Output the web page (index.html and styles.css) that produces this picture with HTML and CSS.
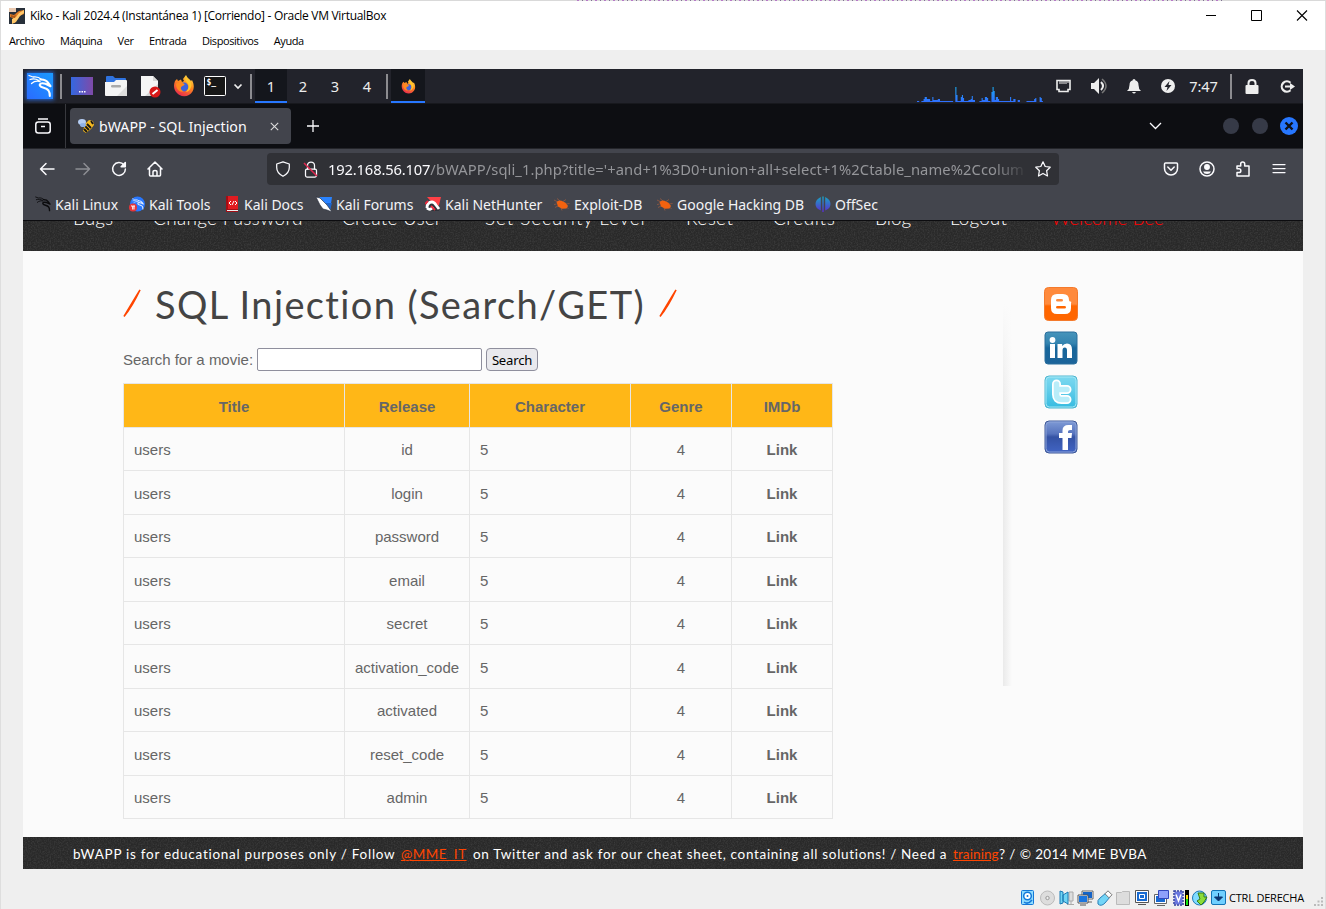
FILE: index.html
```html
<!DOCTYPE html>
<html lang="es">
<head>
<meta charset="utf-8">
<title>Kiko - Kali 2024.4 (Instantánea 1) [Corriendo] - Oracle VM VirtualBox</title>
<link rel="stylesheet" href="styles.css">
</head>
<body>
<svg class="defs" width="0" height="0">
  <defs>
    <linearGradient id="gKali" x1="0" y1="1" x2="1" y2="0"><stop offset="0" stop-color="#2a6bff"/><stop offset="1" stop-color="#1a9bff"/></linearGradient>
    <linearGradient id="gDesk" x1="0" y1="0" x2="1" y2="0"><stop offset="0" stop-color="#3468e0"/><stop offset="1" stop-color="#7f4aa8"/></linearGradient>
    <linearGradient id="gFox" x1="0.8" y1="0" x2="0.3" y2="1"><stop offset="0" stop-color="#ffe14a"/><stop offset="0.45" stop-color="#ff8a1e"/><stop offset="1" stop-color="#e8284e"/></linearGradient>
    <linearGradient id="gOff" x1="0" y1="0" x2="0" y2="1"><stop offset="0" stop-color="#18a5c4"/><stop offset="1" stop-color="#5b2bd0"/></linearGradient>
    <linearGradient id="gSpec" x1="0" y1="0" x2="0" y2="1"><stop offset="0" stop-color="#1aa8f0"/><stop offset="1" stop-color="#2f6fff"/></linearGradient>
    <linearGradient id="gBlog" x1="0" y1="0" x2="0" y2="1"><stop offset="0.5" stop-color="#ff8a3c"/><stop offset="0.56" stop-color="#ff6600"/></linearGradient>
    <linearGradient id="gLi" x1="0" y1="0" x2="0" y2="1"><stop offset="0" stop-color="#4694bb"/><stop offset="0.35" stop-color="#3484b0"/><stop offset="0.5" stop-color="#17669b"/><stop offset="1" stop-color="#1c649a"/></linearGradient>
    <linearGradient id="gTw" x1="0" y1="0" x2="0" y2="1"><stop offset="0" stop-color="#7dd9f0"/><stop offset="0.5" stop-color="#5dcbe9"/><stop offset="1" stop-color="#36bbe0"/></linearGradient>
    <linearGradient id="gFb" x1="0" y1="0" x2="0" y2="1"><stop offset="0" stop-color="#7f9bd6"/><stop offset="0.4" stop-color="#5673bd"/><stop offset="0.5" stop-color="#3452a4"/><stop offset="1" stop-color="#4265c4"/></linearGradient>
    <filter id="grain" x="0" y="0" width="100%" height="100%"><feTurbulence type="fractalNoise" baseFrequency="0.7" numOctaves="2" seed="4"/><feColorMatrix values="0 0 0 0 0.5  0 0 0 0 0.5  0 0 0 0 0.5  1 0 0 0 -0.38"/></filter>
    <symbol id="dragon" viewBox="0 0 24 24"><g fill="none" stroke="currentColor" stroke-linecap="round" stroke-linejoin="round"><path stroke-width="1.300" d="M1 1.500l4 1.500C8 2.500 11 3 13.500 5.500M2 5.500C5 4.500 8 4.800 11 6.500M3.500 9.500C6 7.300 9 6.800 12 7.500"/><path stroke-width="2.100" d="M12.500 5.500c3.500-.2 6 1 7.500 3.200l2.500 3.500-5-2.400c-4.500-1.300-6.500.2-5.500 2 1.500 2.600 6 1.400 8.500 4.700 1.300 1.800 1.300 3.500 1.300 5.500"/></g></symbol>
    <symbol id="fox" viewBox="0 0 22 22"><path fill="url(#gFox)" d="M2 6l2-2 1 2 3-1.500 1 2.500 2-1-1-2 3-4c1 3 4 4 5 6l1-1c2 4 2.500 8 .5 11.500C17 21 11 22.500 6.500 20 2 17.500-.500 12 2 6z"/><circle cx="11" cy="12" r="4.400" fill="#3d63dc"/><path fill="#ff8a1e" d="M3 9c2-2 6-2 8-.300 2 1.500-2 1.800-3 3.600-.5 1.700.5 3.600 3 4-4 1.700-8-2-8-7.300z"/><path fill="#ffc62c" d="M13 1c1 3 5 4 5.500 9-.500 4-3 7-6 7 3-2 4-6 2-9-2-2-3-4-1.500-7z"/></symbol>
    <symbol id="bug" viewBox="0 0 16 16"><path fill="#f2620f" d="M2.500 6q2-2.200 5-1.200l4 2 2.500 3.200-1.500 2.500-4.500.3-4-2.300z"/><path stroke="#c9663a" stroke-width=".5" fill="none" d="M4 6L0 4M6 5L3 2.500M9 5.500l3-2M2.500 8L0 8.500M12 8l3.500-.5M12 11l2.500 1.500M7 12l1 2.500M4 10l-3 1.500"/></symbol>
  </defs>
</svg>

<div class="strip"><i class="s1"></i><i class="s2"></i></div>

<div class="window">
  <header class="titlebar">
    <svg class="app-icon" width="16" height="16" viewBox="0 0 16 16"><path fill="#28303a" d="M0 0h16v16H0z"/><path fill="#e9c9b0" d="M0 0h7v4H0z"/><path d="M1 6l4 1 5-4 5-1v4l-5 2-3 3-1 4H3l1-5-3-1z" fill="#e07c24"/><path d="M3 11l4-2 3-4 5-3v3l-4 3-4 6-4 2z" fill="#ffc86a"/><path fill="#aa5718" d="M2 7l3 1 2-2-1 4-4-1z"/></svg>
    <span class="title">Kiko - Kali 2024.4 (Instantánea 1) [Corriendo] - Oracle VM VirtualBox</span>
    <div class="win-controls">
      <svg width="12" height="12"><path d="M1 5.500h10" stroke="#000"/></svg>
      <svg width="12" height="12"><path d="M.5.500h10v10H.5z" stroke="#000" fill="none"/></svg>
      <svg width="12" height="12"><path d="M1 .5l10 10M11 .5L1 10.500" stroke="#000" stroke-width="1.100"/></svg>
    </div>
  </header>
  <nav class="menubar"><span>Archivo</span><span>Máquina</span><span>Ver</span><span>Entrada</span><span>Dispositivos</span><span>Ayuda</span></nav>

  <main class="screen">
    <div class="panel">
      <div class="slot w34"><svg class="kali" width="26" height="26" viewBox="0 0 26 26"><path fill="url(#gKali)" d="M0 0h26v26H0z"/><use href="#dragon" x="1" y="1" width="24" height="24" color="#fff"/></svg></div>
      <div class="divider w8"></div>
      <div class="slot w34"><svg width="22" height="18" viewBox="0 0 22 18"><path fill="url(#gDesk)" d="M0 0h22v18H0z"/><path fill="#fff" d="M8 14h1.500v1.500H8zM10.500 14H12v1.500h-1.500zM13 14h1.500v1.500H13z"/></svg></div>
      <div class="slot w34"><svg width="22" height="20" viewBox="0 0 22 20"><path fill="#2f73e0" d="M1 1q0-1 1-1h6l2 2h10q1 0 1 1v5H1z"/><path fill="#f4f4f4" d="M0 6h9l2-2h10q1 0 1 1v14q0 1-1 1H1q-1 0-1-1z"/><path fill="#ddd" d="M22 10v10H12z"/><rect x="6" y="9" width="10" height="2.500" rx="1.200" fill="#aaa"/></svg></div>
      <div class="slot w34"><svg width="22" height="23" viewBox="0 0 22 23"><path fill="#f5f5f5" d="M2 1h12l5 5v15H2z"/><path fill="#d7d7d7" d="M14 1v5h5zM6 21L19 9v12z"/><circle cx="16" cy="17" r="5.500" fill="#d81818"/><path d="M13.500 19l5-4" stroke="#fff" stroke-width="2"/></svg></div>
      <div class="slot w34"><svg width="22" height="22"><use href="#fox"/></svg></div>
      <div class="slot w27"><svg width="22" height="20" viewBox="0 0 22 20"><rect x=".5" y=".5" width="21" height="19" rx="1" fill="#171717" stroke="#fff"/><text class="prompt" x="2.500" y="9">$_</text></svg></div>
      <div class="slot w19"><svg width="10" height="7"><path d="M1.500 1.500L5 5l3.500-3.500" fill="none" stroke="#eee" stroke-width="1.700"/></svg></div>
      <div class="divider w8"></div>
      <div class="slot w32 active">1</div><div class="slot w32">2</div><div class="slot w32">3</div><div class="slot w32">4</div>
      <div class="divider w8"></div>
      <div class="slot w34 active"><svg width="15" height="15" viewBox="0 0 22 22"><use href="#fox" width="22" height="22"/></svg></div>
      <div class="grow"></div>
      <svg class="spectrum" width="127" height="18" viewBox="4 0 116 18" preserveAspectRatio="none"><path fill="url(#gSpec)" d="M0 17h4v-1h2v1h2v-1h2v-2h1v-2h2v2h3v2h2v-4h1v3h4v-1h2v2h12v1h2V2h1v8h1v6h3v-4h1v-2h1v3h1v3h4v-1h2v-1h1v-3h1v4h2v2h4v-1h2v-3h1v2h2v-3h2v1h1v3h2v1h1V7h1V2h1v4h1v9h1v-3h2v2h1v2h10v-4h1v4h2v-2h2v3h2v-2h2v2h6v-1h4v0h3v-2h1v-1h1v4h3v-5h1v1h1v3h1v1H0z"/></svg>
      <div class="slot w38"><svg width="15" height="14" viewBox="0 0 15 14"><path d="M1 1.500h13v9h-2v2H3v-2H1z" fill="none" stroke="#eee" stroke-width="1.600"/><path d="M4 2v3M6 2v3M8 2v3M10 2v3M12 2v2" stroke="#eee"/></svg></div>
      <div class="slot w34"><svg width="18" height="16" viewBox="0 0 18 16"><path fill="#eee" d="M1 5h3l5-5v16l-5-5H1z"/><path d="M11 4q4 4 0 8" fill="none" stroke="#eee" stroke-width="2"/><path d="M12 1q8 7 0 14" fill="none" stroke="#777" stroke-width="1.500"/></svg></div>
      <div class="slot w36"><svg width="14" height="15" viewBox="0 0 14 15"><path fill="#eee" d="M7 0q1.500 0 1.500 1.500 3 .8 3 4.500 0 4 2.500 6H0q2.500-2 2.500-6 0-3.700 3-4.500Q5.500 0 7 0zM5 13h4q-2 3-4 0z"/></svg></div>
      <div class="slot w32"><svg width="14" height="14" viewBox="0 0 14 14"><circle cx="7" cy="7" r="7" fill="#eee"/><path fill="#22232b" d="M8.500 2L3.500 8H6.500L5.500 12l5-6H7.500z"/></svg></div>
      <div class="slot clock">7:47</div>
      <div class="divider w16"></div>
      <div class="slot w26"><svg width="14" height="15" viewBox="0 0 14 15"><rect x=".5" y="6" width="13" height="9" rx="1" fill="#eee"/><path d="M3.500 7V4q0-3 3.500-3t3.500 3v3" fill="none" stroke="#eee" stroke-width="2"/></svg></div>
      <div class="slot w32 exit"><svg width="15" height="13" viewBox="0 0 15 13"><path d="M10.500 2.700A5.200 5.200 0 1 0 10.500 10.300" fill="none" stroke="#eee" stroke-width="2.200"/><path d="M5 6.500h6" stroke="#eee" stroke-width="2"/><path fill="#eee" d="M10 3l5 3.500-5 3.500z"/></svg></div>
    </div>

    <div class="tabbar">
      <div class="tab-history"><svg width="16" height="16" viewBox="0 0 16 16" fill="none" stroke="#fbfbfe" stroke-width="1.500"><path d="M3 1h10"/><rect x=".8" y="4" width="14.400" height="11" rx="2.500"/><path d="M6 8.500h4"/></svg></div>
      <div class="tab">
        <svg width="17" height="16" viewBox="0 0 17 16"><path fill="#f3b820" d="M7 6l4-4 4 1 1 4-3 4-5 4-3-2z"/><path d="M7 8l4 4M9 6l4 4M6 11l3 3M13 3l2 3" stroke="#151515" stroke-width="1.800"/><ellipse cx="4" cy="4" rx="4" ry="3" fill="#b5cdf3"/><ellipse cx="5" cy="7" rx="3" ry="2" fill="#8fb2e8"/></svg>
        <span>bWAPP - SQL Injection</span>
        <svg class="tab-close" width="9" height="9"><path d="M.8.800l7.400 7.400M8.200.800L.8 8.200" stroke="#ddd" stroke-width="1.100"/></svg>
      </div>
      <svg class="plus" width="12" height="12"><path d="M6 0v12M0 6h12" stroke="#fbfbfe" stroke-width="1.300"/></svg>
      <div class="grow"></div>
      <svg class="all-tabs" width="13" height="8"><path d="M1 1l5.500 5.500L12 1" fill="none" stroke="#fbfbfe" stroke-width="1.300"/></svg>
      <svg class="frame-controls" width="78" height="20" viewBox="0 0 78 20"><circle cx="10" cy="10" r="8" fill="#363a47"/><circle cx="39" cy="10" r="8" fill="#363a47"/><circle cx="68" cy="10" r="9" fill="#2777ff"/><path d="M64.500 6.500l7 7M71.500 6.500l-7 7" stroke="#101116" stroke-width="2.400"/></svg>
    </div>

    <div class="toolbar">
      <div class="nav-buttons">
        <svg width="16" height="16" viewBox="0 0 16 16" class="ln"><path d="M15 8H1.500M7 2.500L1.500 8 7 13.500"/></svg>
        <svg width="16" height="16" viewBox="0 0 16 16" class="ln dim"><path d="M1 8h13.500M9 2.500L14.500 8 9 13.500"/></svg>
        <svg width="16" height="16" viewBox="0 0 16 16" class="ln"><path d="M13 4A6.400 6.400 0 1 0 14.400 8"/><path d="M14.300 1.500v4.200h-4.200z" fill="#fbfbfe"/></svg>
        <svg width="16" height="16" viewBox="0 0 16 16" class="ln"><path d="M1 8l7-7 7 7M2.500 7v7q0 1 1 1h9q1 0 1-1V7M6 15v-4q0-1.500 2-1.500t2 1.500v4"/></svg>
      </div>
      <div class="urlbar">
        <svg width="16" height="16" viewBox="0 0 16 16" class="ln thin"><path d="M8 .8l6.300 2.200v3.500Q14.300 12 8 15.300 1.700 12 1.700 6.500V3z"/></svg>
        <svg class="insecure" width="16" height="17" viewBox="0 0 16 17"><g class="ln thin"><rect x="2.500" y="8" width="11" height="8" rx="1.500"/><path d="M4.500 8V4.500a3.500 3.500 0 0 1 7 0V8"/></g><path d="M1 2l13 13" stroke="#e22850" stroke-width="1.500"/></svg>
        <span class="url"><b>192.168.56.107</b>/bWAPP/sqli_1.php?title='+and+1%3D0+union+all+select+1%2Ctable_name%2Ccolum</span>
        <svg width="16" height="16" viewBox="0 0 16 16" class="ln thin"><path d="M8 .8l2.200 4.700 5 .7-3.600 3.500.9 5.300L8 12.500 3.500 15l.9-5.300L.8 6.200l5-.7z"/></svg>
      </div>
      <div class="grow"></div>
      <div class="nav-buttons right">
        <svg width="16" height="16" viewBox="0 0 16 16" class="ln"><path d="M2.500 2h11q1 0 1 1v4.500a6.500 6.500 0 0 1-13 0V3q0-1 1-1zM4.800 6L8 9.200 11.200 6"/></svg>
        <svg width="16" height="16" viewBox="0 0 16 16" class="ln"><circle cx="8" cy="8" r="7"/><circle cx="8" cy="6" r="2.200" fill="#fbfbfe"/><path d="M4 10.500h8q-1 2.500-4 2.500t-4-2.500z" fill="#fbfbfe" stroke="none"/></svg>
        <svg width="16" height="16" viewBox="0 0 16 16" class="ln"><path d="M2 15V11.500h2a1.700 1.700 0 0 0 0-3.700H2V5h3.700V3a2 2 0 0 1 4 0v2H14v10z"/></svg>
        <svg width="16" height="16" viewBox="0 0 16 16" class="ln thin"><path d="M2 3.500h12M2 7.500h12M2 11.500h12"/></svg>
      </div>
    </div>

    <div class="bookmarks">
      <span class="bm b1"><svg width="16" height="16"><use href="#dragon" width="16" height="16" color="#0b0b0d"/></svg>Kali Linux</span>
      <span class="bm b2"><svg width="16" height="16" viewBox="0 0 16 16"><circle cx="8.500" cy="8" r="7.500" fill="#2777ff"/><use href="#dragon" x="3" y="2" width="12" height="12" color="#e8f0ff"/><circle cx="4" cy="11.500" r="4" fill="#e5353a"/><path d="M2 10h1.700v3.500M4 10h2M5 10v3.500" stroke="#fff" fill="none"/></svg>Kali Tools</span>
      <span class="bm b3"><svg width="16" height="16" viewBox="0 0 16 16"><path fill="#a30e15" d="M2 0h12v16H2z"/><path fill="#e01b20" d="M4 0h10v13H4z"/><path fill="#eee" d="M3 14h11v1H3z"/><path d="M7 5L5 7l2 2M11 5l2 2-2 2M10 5L8 9" stroke="#fff" fill="none"/></svg>Kali Docs</span>
      <span class="bm b4"><svg width="16" height="16" viewBox="0 0 16 16"><path fill="#2a83ff" d="M3 1h13l-2 13z"/><path fill="#1d65cc" d="M8 7h8l-2 7z"/><path fill="#fff" stroke="#202735" stroke-width=".6" d="M0 1l4 1 3 3 4 4 5 7-5-2-4-1-3-4z"/></svg>Kali Forums</span>
      <span class="bm b5"><svg width="16" height="16" viewBox="0 0 16 16"><path fill="#ff4046" d="M2 1h14l-3 12z"/><path fill="#30333a" d="M0 8l7-3 7 5v5H2z"/><path fill="none" stroke="#fff" stroke-width="2.800" d="M2 12q0-6 5-6 2 0 4 3l3 4M2 12q3 3 6-1"/><path fill="none" stroke="#e9283c" stroke-width="1.800" d="M3 5l-3 3M6 10l4 4"/></svg>Kali NetHunter</span>
      <span class="bm b6"><svg width="16" height="16"><use href="#bug"/></svg>Exploit-DB</span>
      <span class="bm b7"><svg width="16" height="16"><use href="#bug"/></svg>Google Hacking DB</span>
      <span class="bm b8"><svg width="16" height="16" viewBox="0 0 16 16" fill="url(#gOff)"><path d="M5.800 1v13.500Q.5 12.500.5 8T5.800 1zM10.200 1v13.500Q15.500 12.500 15.500 8T10.200 1zM7.300.500h1.400v15.500H7.300z"/></svg>OffSec</span>
    </div>

    <div class="page">
      <div class="site-nav">
        <svg class="grain"><rect width="100%" height="100%" filter="url(#grain)"/></svg>
        <div class="links"><span class="n1">Bugs</span><span class="n2">Change Password</span><span class="n3">Create User</span><span class="n4">Set Security Level</span><span class="n5">Reset</span><span class="n6">Credits</span><span class="n7">Blog</span><span class="n8">Logout</span><span class="n9">Welcome Bee</span></div>
      </div>
      <div class="content">
        <section class="main">
          <h1><svg width="18" height="30"><path d="M1 27.500Q9 18 17 1 12 9 1 27.500z" fill="#ff4500" stroke="#ff4500" stroke-width="1.500"/></svg><span>SQL Injection (Search/GET)</span><svg width="18" height="30"><path d="M1 27.500Q9 18 17 1 12 9 1 27.500z" fill="#ff4500" stroke="#ff4500" stroke-width="1.500"/></svg></h1>
          <form class="search"><label for="title">Search for a movie:</label><input id="title" type="text"><button type="button">Search</button></form>
          <table>
            <colgroup><col class="c1"><col class="c2"><col class="c3"><col class="c4"><col class="c5"></colgroup>
            <thead><tr><th>Title</th><th>Release</th><th>Character</th><th>Genre</th><th>IMDb</th></tr></thead>
            <tbody>
              <tr><td>users</td><td>id</td><td>5</td><td>4</td><td>Link</td></tr>
              <tr><td>users</td><td>login</td><td>5</td><td>4</td><td>Link</td></tr>
              <tr><td>users</td><td>password</td><td>5</td><td>4</td><td>Link</td></tr>
              <tr><td>users</td><td>email</td><td>5</td><td>4</td><td>Link</td></tr>
              <tr><td>users</td><td>secret</td><td>5</td><td>4</td><td>Link</td></tr>
              <tr><td>users</td><td>activation_code</td><td>5</td><td>4</td><td>Link</td></tr>
              <tr><td>users</td><td>activated</td><td>5</td><td>4</td><td>Link</td></tr>
              <tr><td>users</td><td>reset_code</td><td>5</td><td>4</td><td>Link</td></tr>
              <tr><td>users</td><td>admin</td><td>5</td><td>4</td><td>Link</td></tr>
            </tbody>
          </table>
        </section>
        <aside class="side">
          <svg width="34" height="34" viewBox="0 0 34 34"><rect x=".5" y=".5" width="33" height="33" rx="4" fill="url(#gBlog)" stroke="#f47a2c"/><path fill="#fff" fill-rule="evenodd" d="M13 7h6q6 0 6 6 0 1.500 1.500 1.500T27 16v5q0 6-6 6h-8q-6 0-6-6v-8q0-6 6-6zm.5 5q-1.500 0-1.500 1.300t1.500 1.300h4q1.500 0 1.500-1.300T17.500 12zm0 7q-1.500 0-1.500 1.300t1.500 1.300h7q1.500 0 1.500-1.300T20.500 19z"/></svg>
          <svg width="34" height="34" viewBox="0 0 34 34"><rect x="1" y="1" width="32" height="32" rx="3" fill="url(#gLi)" stroke="#2b6e9c"/><circle cx="8.500" cy="9" r="2.900" fill="#fff"/><path fill="#fff" d="M6 13h5v14H6zM13.500 13h4.700v2q1.600-2.500 4.800-2.500 5 0 5 6V27h-5v-7.500q0-3-2.200-3-2.300 0-2.300 3V27h-5z"/></svg>
          <svg width="34" height="34" viewBox="0 0 34 34"><rect x="1" y="1" width="32" height="32" rx="4" fill="url(#gTw)" stroke="#4fb5cf"/><rect x="2" y="2" width="30" height="30" rx="3.500" fill="none" stroke="#a5e7f5"/><path d="M12.500 9v10.500q0 5 5 5H23M12.500 14.500H23" fill="none" stroke="#fff" stroke-width="9" stroke-linecap="round"/><path d="M12.500 9v10.500q0 5 5 5H23M12.500 14.500H23" fill="none" stroke="#b9edf9" stroke-width="5.500" stroke-linecap="round"/></svg>
          <svg width="34" height="34" viewBox="0 0 34 34"><rect x="1" y="1" width="32" height="32" rx="4" fill="url(#gFb)" stroke="#3d5796"/><rect x="2" y="2" width="30" height="30" rx="3.500" fill="none" stroke="#8da4d8"/><path fill="#fff" d="M18.500 30V18H15v-5h3.500v-2.500q0-5.500 6-5.500h3.500v5h-2q-2 0-2 1.500V13h4l-.5 5H24v12z"/></svg>
        </aside>
      </div>
      <footer>
        <svg class="grain"><rect width="100%" height="100%" filter="url(#grain)"/></svg>
        <p><span class="f1">bWAPP is for educational purposes only / Follow</span><a class="f2">@MME_IT</a><span class="f3">on Twitter and ask for our cheat sheet, containing all solutions! / Need a</span><a class="f4">training</a><span class="f5">? / © 2014 MME BVBA</span></p>
      </footer>
    </div>
  </main>

  <div class="statusbar">
    <svg width="206" height="16" viewBox="0 0 206 16">
      <rect x="1.500" y=".5" width="12" height="14" rx="1" fill="#8fdcff" stroke="#1378d8"/><circle cx="7.500" cy="6" r="3.800" fill="#fff" stroke="#1378d8" stroke-width="1.500"/><circle cx="7.500" cy="6" r="1" fill="#1378d8"/><path d="M4 12q4 3 8-2" stroke="#1378d8" fill="none" stroke-width="1.500"/>
      <circle cx="27.500" cy="8" r="7" fill="#ddd" stroke="#bbb"/><circle cx="27.500" cy="8" r="1.700" fill="#eee" stroke="#999"/>
      <path d="M49 2h4v9h-4zM47 14.500h7M51 11v3" stroke="#aaa" fill="#ddd"/><path d="M40 1l3 1v11l-3 1zM43 5l5-3v12l-5-3z" fill="#70d4f4" stroke="#1b7ab5"/>
      <path d="M62.500 1.500h10v7h-10z" fill="#1464c8" stroke="#fff"/><path d="M62 1h11v8H62zM68 12h4" fill="none" stroke="#666"/><path d="M58.500 5.500h9v7h-9z" fill="#1b76df" stroke="#fff"/><path d="M58 5h10v8H58zM60 15h6" fill="none" stroke="#555"/>
      <path d="M86 3l4 4-5 6q-4 4-7 1-1-4 2-6z" fill="#73d5f7" stroke="#2b7fb6"/><path d="M88 .8l4 4-3 3-4-4z" fill="#fff" stroke="#777"/>
      <path d="M96.500 2.500h5l1-1h7v13h-13z" fill="#ddd" stroke="#bbb"/>
      <path d="M115.500.500h13v12h-13zM118 14.500h8" fill="#fff" stroke="#555"/><path d="M117 2h10v9h-10z" fill="#176ad1"/><path d="M119.500 4.500h5v4h-5z" fill="#176ad1" stroke="#fff"/>
      <path d="M134.500 4.500h12v9h-12zM137 15.500h8" fill="#fff" stroke="#666"/><path d="M136 6h9v6h-9z" fill="#176ad1"/><path d="M138.500.500h10v8h-10z" fill="#8ea0fa" stroke="#3348bd"/>
      <path d="M154.500 1.500h8v13h-8z" fill="#6877df"/><path d="M154 1h9v14h-9z" fill="none" stroke="#3140a1" stroke-width="1.500" stroke-dasharray="2 1"/><path d="M156 4.500l2.500 6.500L161 4.500" fill="none" stroke="#fff" stroke-width="1.500"/><path d="M165 0h4v16h-4z"/><path d="M166 5h2v4h-2z" fill="#ffe000"/><path d="M166 9h2v6h-2z" fill="#12e512"/>
      <circle cx="179.500" cy="8" r="7" fill="#80dbff" stroke="#1e78b8"/><path d="M178 3l6 0v4l3 0-3 5-3 3-4-4 3-2z" fill="#8cdd39" stroke="#387a1a"/>
      <rect x="191.500" y=".5" width="14" height="14" rx="1.500" fill="#70d0ff" stroke="#1374b6"/><path d="M198.500 3v5M194.500 7h8l-4 4z" fill="#0b3570" stroke="#0b3570"/>
    </svg>
    <span>CTRL DERECHA</span>
    <svg class="grip" width="10" height="10"><path fill="#bbb" d="M7 0h2v2H7zM7 3.500h2v2H7zM7 7h2v2H7zM3.500 3.500h2v2h-2zM3.500 7h2v2h-2zM0 7h2v2H0z"/></svg>
  </div>
</div>
</body>
</html>
```
FILE: styles.css
```css
* { box-sizing: border-box; }
body { margin: 0; width: 1326px; height: 909px; overflow: hidden; background: #efefef; font-family: "Noto Sans", sans-serif; }
svg { display: block; flex: none; }
.defs { position: absolute; }
.strip { height: 1px; background: #d9d9d9; display: flex; }
.strip .s1 { width: 577px; }
.strip .s2 { width: 645px; background: repeating-linear-gradient(90deg, #b778c8 0 2px, #ddd 2px 5px, #7f7192 5px 6px, #ddd 6px 9px); }
.window { height: 908px; border-left: 1px solid #dedede; border-right: 1px solid #dedede; display: flex; flex-direction: column; }
.grow { flex: 1; }

/* VirtualBox frame */
.titlebar { height: 30px; background: #fff; display: flex; align-items: center; padding-left: 8px; }
.title { margin-left: 5px; font: 12px/16px "Open Sans", sans-serif; letter-spacing: -.3px; color: #000; flex: 1; white-space: nowrap; }
.win-controls { display: flex; gap: 33.500px; padding-right: 17px; }
.menubar { height: 19px; background: #fff; display: flex; gap: 15.500px; padding-left: 8px; font: 11px/19px "Open Sans", sans-serif; letter-spacing: -.42px; color: #000; }
.screen { width: 1280px; height: 800px; margin: 19px 0 0 22px; display: flex; flex-direction: column; overflow: hidden; }
.statusbar { height: 40px; display: flex; align-items: center; justify-content: flex-end; padding-top: 18px; font: 11px/16px "Open Sans", sans-serif; letter-spacing: -.2px; color: #000; gap: 3px; }
.grip { margin: 8px 1px 0 7px; }

/* Desktop panel */
.panel { height: 35px; flex: none; background: #22232b; border-bottom: 1px solid #17181d; display: flex; color: #ededed; font-size: 14.600px; }
.slot { display: flex; align-items: center; justify-content: center; height: 34px; }
.w8 { width: 8px; } .w16 { width: 16px; } .w19 { width: 19px; } .w26 { width: 26px; } .w27 { width: 27px; } .w32 { width: 32px; } .w34 { width: 34px; } .w36 { width: 36px; } .w38 { width: 38px; }
.divider { height: 25px; margin-top: 5px; background: linear-gradient(#8c8c90, #8c8c90) center / 2px 100% no-repeat; }
.active { background: #14161c; border-bottom: 2px solid #2777ff; padding-top: 2px; }
.kali { box-shadow: 0 0 4px 1px #2563cf; }
.prompt { font: bold 8px "DejaVu Sans Mono", monospace; fill: #fff; }
.spectrum { margin-top: 16px; }
.clock { width: 39px; letter-spacing: -.1px; }
.exit { margin-left: 6px; }

/* Browser chrome */
.tabbar { height: 45px; flex: none; background: #0d0e12; display: flex; align-items: center; border-bottom: 1px solid #24252a; }
.tab-history { width: 43px; height: 44px; border-right: 1px solid #38393e; display: flex; align-items: center; justify-content: center; padding-right: 2px; }
.tab { width: 221px; height: 36px; margin-left: 4px; background: #42444c; border-radius: 4px; display: flex; align-items: center; padding-left: 8px; color: #fbfbfe; font-size: 14.200px; }
.tab span { margin-left: 4px; flex: 1; white-space: nowrap; }
.tab-close { margin-right: 12px; }
.plus { margin-left: 16px; }
.all-tabs { margin-right: 59px; }
.frame-controls { margin-right: 4px; }
.toolbar { height: 40px; flex: none; background: #43454d; display: flex; align-items: center; }
.nav-buttons { width: 244px; display: flex; gap: 20px; padding-left: 16px; }
.nav-buttons.right { width: 140px; padding: 0 16px 0 0; }
.ln { fill: none; stroke: #fbfbfe; stroke-width: 1.500; stroke-linejoin: round; stroke-linecap: round; }
.thin { stroke-width: 1.250; }
.dim { opacity: .4; }
.urlbar { width: 792px; height: 32px; background: #303136; border-radius: 4px; display: flex; align-items: center; padding: 0 8px; }
.insecure { margin-left: 12px; }
.url { margin-left: 9px; width: 700px; margin-right: 7px; overflow: hidden; white-space: nowrap; color: #95969a; font-size: 14.720px; letter-spacing: .085px; -webkit-mask-image: linear-gradient(90deg, #000 95%, transparent); mask-image: linear-gradient(90deg, #000 95%, transparent); }
.url b { color: #fbfbfe; font-weight: 400; letter-spacing: -.15px; }
.bookmarks { height: 32px; flex: none; background: #43454d; border-bottom: 1px solid #0c0c0f; display: flex; padding-left: 12px; color: #f3f3f6; font-size: 14px; }
.bm { display: flex; align-items: center; gap: 4px; white-space: nowrap; height: 30px; }
.b1 { width: 94px; } .b2 { width: 95px; } .b3 { width: 92px; } .b4 { width: 109px; } .b5 { width: 129px; } .b6 { width: 103px; } .b7 { width: 158px; }

/* Web page */
.page { flex: 1; display: flex; flex-direction: column; background: #fbfbfb; }
.site-nav { height: 30px; background: #292929; position: relative; overflow: hidden; }
.grain { position: absolute; left: 0; top: 0; width: 100%; height: 100%; opacity: .28; }
.links { position: relative; display: flex; margin-top: -15px; padding-left: 50px; color: #fff; font: 300 19px/24px Lato, sans-serif; white-space: nowrap; }
.n1 { width: 80px; } .n2 { width: 189px; letter-spacing: .3px; } .n3 { width: 143px; letter-spacing: .2px; } .n4 { width: 201px; letter-spacing: .9px; } .n5 { width: 87px; letter-spacing: .4px; } .n6 { width: 102px; letter-spacing: .6px; } .n7 { width: 75px; } .n8 { width: 101px; letter-spacing: .1px; } .n9 { color: #f00; letter-spacing: -.1px; }
.content { height: 586px; display: flex; }
.main { width: 980px; padding: 26px 0 0 100px; }
h1 { margin: 0; height: 54px; display: flex; align-items: center; color: #444; font: 400 38px/54px Lato, sans-serif; white-space: nowrap; }
h1 span { width: 504px; margin: 0 0 0 14px; letter-spacing: 1.370px; }
.search { height: 24px; margin: 16px 0 12px; display: flex; align-items: center; color: #666; font: 15px/24px "Liberation Sans", sans-serif; }
.search label { width: 134px; padding-top: 1px; }
.search input { width: 225px; height: 23px; border: 1px solid #8f8f9d; border-radius: 2px; background: #fff; }
.search button { width: 52px; height: 23px; margin-left: 4px; padding: 2px 0 0; border: 1px solid #8f8f9d; border-radius: 4px; background: #e9e9ed; color: #000; font: 13.100px/19px "Noto Sans", sans-serif; letter-spacing: -.2px; }
table { width: 710px; table-layout: fixed; border-collapse: collapse; color: #666; font: 15px/20px "Liberation Sans", sans-serif; }
.c1 { width: 221px; } .c2 { width: 125px; } .c3 { width: 161px; } .c4 { width: 101px; } .c5 { width: 101px; }
th, td { border: 1px solid #e6e6e6; padding: 2px 10px 0; text-align: center; }
th { height: 44px; background: #ffb717; padding-top: 3px; }
td { height: 43px; }
tr:nth-child(even) td { height: 44px; }
td:nth-child(1), td:nth-child(3) { text-align: left; }
td:nth-child(2) { padding-left: 0; padding-right: 0; }
td:nth-child(5) { font-weight: 700; }
.side { width: 300px; height: 390px; margin-top: 45px; padding-left: 41px; display: flex; flex-direction: column; gap: 10.200px; background: linear-gradient(#fbfbfb 2%, transparent 30%), linear-gradient(90deg, #eaeaea, #fbfbfb 9px); }
.side svg:first-child { margin-top: -9px; }
footer { height: 32px; background: #292929; position: relative; }
footer p { position: relative; margin: 0; padding: 1px 0 0 50px; display: flex; color: #fff; font: 400 13.500px/33px Lato, sans-serif; white-space: pre; }
footer a { color: #ff4500; text-decoration: underline; }
.f1 { width: 328px; letter-spacing: .73px; } .f2 { width: 72px; letter-spacing: .5px; } .f3 { width: 480px; letter-spacing: .68px; } .f4 { width: 46px; letter-spacing: .1px; } .f5 { letter-spacing: .4px; }
```
